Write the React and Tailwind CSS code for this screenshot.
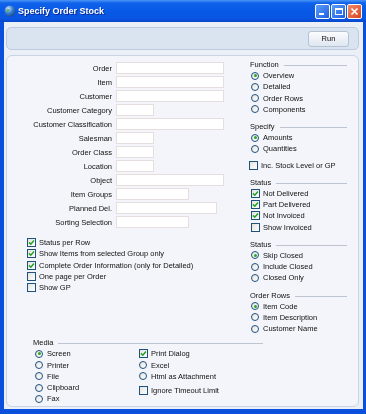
import React from 'react';

const fields = [
  { label: 'Order', w: 'w-[108px]' },
  { label: 'Item', w: 'w-[108px]' },
  { label: 'Customer', w: 'w-[108px]' },
  { label: 'Customer Category', w: 'w-[38px]' },
  { label: 'Customer Classification', w: 'w-[108px]' },
  { label: 'Salesman', w: 'w-[38px]' },
  { label: 'Order Class', w: 'w-[38px]' },
  { label: 'Location', w: 'w-[38px]' },
  { label: 'Object', w: 'w-[108px]' },
  { label: 'Item Groups', w: 'w-[73px]' },
  { label: 'Planned Del.', w: 'w-[101px]' },
  { label: 'Sorting Selection', w: 'w-[73px]' },
];

function CheckBox({ checked }) {
  return (
    <span className="w-[9px] h-[9px] shrink-0 border border-[#1c5180] bg-gradient-to-br from-[#e4e3dc] to-white flex items-center justify-center">
      {checked && (
        <svg width="7" height="7" viewBox="0 0 7 7">
          <path d="M1 3.4 L2.8 5.2 L6 1.6" fill="none" stroke="#21a121" strokeWidth="1.5" />
        </svg>
      )}
    </span>
  );
}

function Check({ checked, label, className = '' }) {
  return (
    <div className={`flex items-center h-[11.25px] gap-[3px] ${className}`}>
      <CheckBox checked={checked} />
      <span className="whitespace-nowrap">{label}</span>
    </div>
  );
}

function Radio({ checked, label, className = '' }) {
  return (
    <div className={`flex items-center h-[11.25px] gap-[4px] ${className}`}>
      <span className="w-[8px] h-[8px] shrink-0 rounded-full border border-[#1c5180] bg-gradient-to-br from-[#e4e3dc] to-white flex items-center justify-center">
        {checked && <span className="w-[3px] h-[3px] rounded-full bg-[#27a827]" />}
      </span>
      <span className="whitespace-nowrap">{label}</span>
    </div>
  );
}

function Header({ children, className = '' }) {
  return (
    <div className={`flex items-center h-[11px] ${className}`}>
      <span className="whitespace-nowrap">{children}</span>
      <div className="flex-1 h-px bg-[#bcc4d2] ml-[5px] mt-[2px]" />
    </div>
  );
}

function TitleBar() {
  return (
    <div className="h-[22px] shrink-0 flex items-center pl-[4px] pr-[4px] bg-[linear-gradient(to_bottom,#4a95f7_0%,#0f62ea_14%,#0758e6_55%,#0a55e2_85%,#0747c8_100%)]">
      <svg width="12" height="12" viewBox="0 0 12 12">
        <defs>
          <radialGradient id="g" cx="0.35" cy="0.3" r="0.8">
            <stop offset="0" stopColor="#d8ecff" />
            <stop offset="0.45" stopColor="#3f86d6" />
            <stop offset="1" stopColor="#13407f" />
          </radialGradient>
        </defs>
        <circle cx="6" cy="6" r="5.5" fill="url(#g)" />
        <path d="M3 4 Q5 3 6 5 Q5 7 3 7 Z" fill="#5fa845" opacity="0.8" />
      </svg>
      <span className="ml-[2px] text-white font-bold text-[9px] leading-none [text-shadow:1px_1px_0_#0b2a8c]">Specify Order Stock</span>
      <div className="ml-auto flex gap-[1px]">
        <div className="w-[15px] h-[15px] rounded-[2px] border border-white bg-gradient-to-br from-[#5c9cf8] to-[#1f5ee2] flex items-end pl-[3px] pb-[3px]">
          <span className="w-[5px] h-[2px] bg-white" />
        </div>
        <div className="w-[15px] h-[15px] rounded-[2px] border border-white bg-gradient-to-br from-[#5c9cf8] to-[#1f5ee2] flex items-center justify-center">
          <span className="w-[8px] h-[7px] border border-white border-t-2" />
        </div>
        <div className="w-[15px] h-[15px] rounded-[2px] border border-white bg-gradient-to-br from-[#ef8a64] to-[#d8421d] flex items-center justify-center">
          <svg width="9" height="9" viewBox="0 0 9 9">
            <path d="M1.5 1.5 L7.5 7.5 M7.5 1.5 L1.5 7.5" stroke="white" strokeWidth="1.6" />
          </svg>
        </div>
      </div>
    </div>
  );
}

export default function App() {
  return (
    <div className="w-[366px] h-[414px] flex flex-col bg-[#0b50dd] font-['Liberation_Sans',Arial,sans-serif] text-[7.5px] leading-[11px] text-[#111] overflow-hidden [transform:translateZ(0)] [will-change:transform]">
      <TitleBar />
      <div className="flex-1 flex flex-col ml-[4px] mr-[3px] mb-[5px] bg-[#ebeff6] pl-[2px] pr-[4px] pt-[5px] pb-[2px] gap-[5px]">
        {/* Toolbar */}
        <div className="h-[23px] shrink-0 rounded-[5px] border border-[#bccbe0] bg-[#dae3f0] flex items-center justify-end pr-[9px]">
          <button className="w-[41px] h-[16px] rounded-[3px] border border-[#b5c2d6] bg-gradient-to-b from-[#fbfcfe] to-[#dfe6f0] text-[7.5px] leading-none">
            Run
          </button>
        </div>

        {/* Main panel */}
        <div className="flex-1 rounded-[6px] border border-[#c9d4e6] bg-[#f3f5fa] flex flex-col">
          <div className="flex">
            <div className="w-[243px] pt-[6px] flex flex-col">
              <div className="flex flex-col gap-[2px]">
                {fields.map(f => (
                  <div key={f.label} className="flex items-center h-[12px]">
                    <span className="w-[105px] text-right whitespace-nowrap">{f.label}</span>
                    <span className={`ml-[4px] h-[12px] border border-[#e6dede] bg-white ${f.w}`} />
                  </div>
                ))}
              </div>
              <div className="mt-[9px] pl-[20px] flex flex-col">
                <Check checked label="Status per Row" />
                <Check checked label="Show Items from selected Group only" />
                <Check checked label="Complete Order Information (only for Detailed)" />
                <Check label="One page per Order" />
                <Check label="Show GP" />
              </div>
            </div>

            <div className="flex-1 pt-[3px] pr-[11px] flex flex-col">
              <Header>Function</Header>
              <div className="pl-[1px]">
                <Radio checked label="Overview" />
                <Radio label="Detailed" />
                <Radio label="Order Rows" />
                <Radio label="Components" />
              </div>
              <Header className="mt-[6px]">Specify</Header>
              <div className="pl-[1px]">
                <Radio checked label="Amounts" />
                <Radio label="Quantities" />
              </div>
              <Check className="mt-[5px] -ml-[1px]" label="Inc. Stock Level or GP" />
              <Header className="mt-[6px]">Status</Header>
              <div className="pl-[1px]">
                <Check checked label="Not Delivered" />
                <Check checked label="Part Delivered" />
                <Check checked label="Not Invoiced" />
                <Check label="Show Invoiced" />
              </div>
              <Header className="mt-[6px]">Status</Header>
              <div className="pl-[1px]">
                <Radio checked label="Skip Closed" />
                <Radio label="Include Closed" />
                <Radio label="Closed Only" />
              </div>
              <Header className="mt-[6px]">Order Rows</Header>
              <div className="pl-[1px]">
                <Radio checked label="Item Code" />
                <Radio label="Item Description" />
                <Radio label="Customer Name" />
              </div>
            </div>
          </div>

          {/* Media */}
          <div className="mt-[3px] ml-[26px] w-[230px] flex flex-col">
            <Header>Media</Header>
            <div className="flex">
              <div className="w-[106px] pl-[2px] flex flex-col">
                <Radio checked label="Screen" />
                <Radio label="Printer" />
                <Radio label="File" />
                <Radio label="Clipboard" />
                <Radio label="Fax" />
              </div>
              <div className="flex flex-col">
                <Check checked label="Print Dialog" />
                <Radio label="Excel" />
                <Radio label="Html as Attachment" />
                <Check className="mt-[3px]" label="Ignore Timeout Limit" />
              </div>
            </div>
          </div>
        </div>
      </div>
    </div>
  );
}
